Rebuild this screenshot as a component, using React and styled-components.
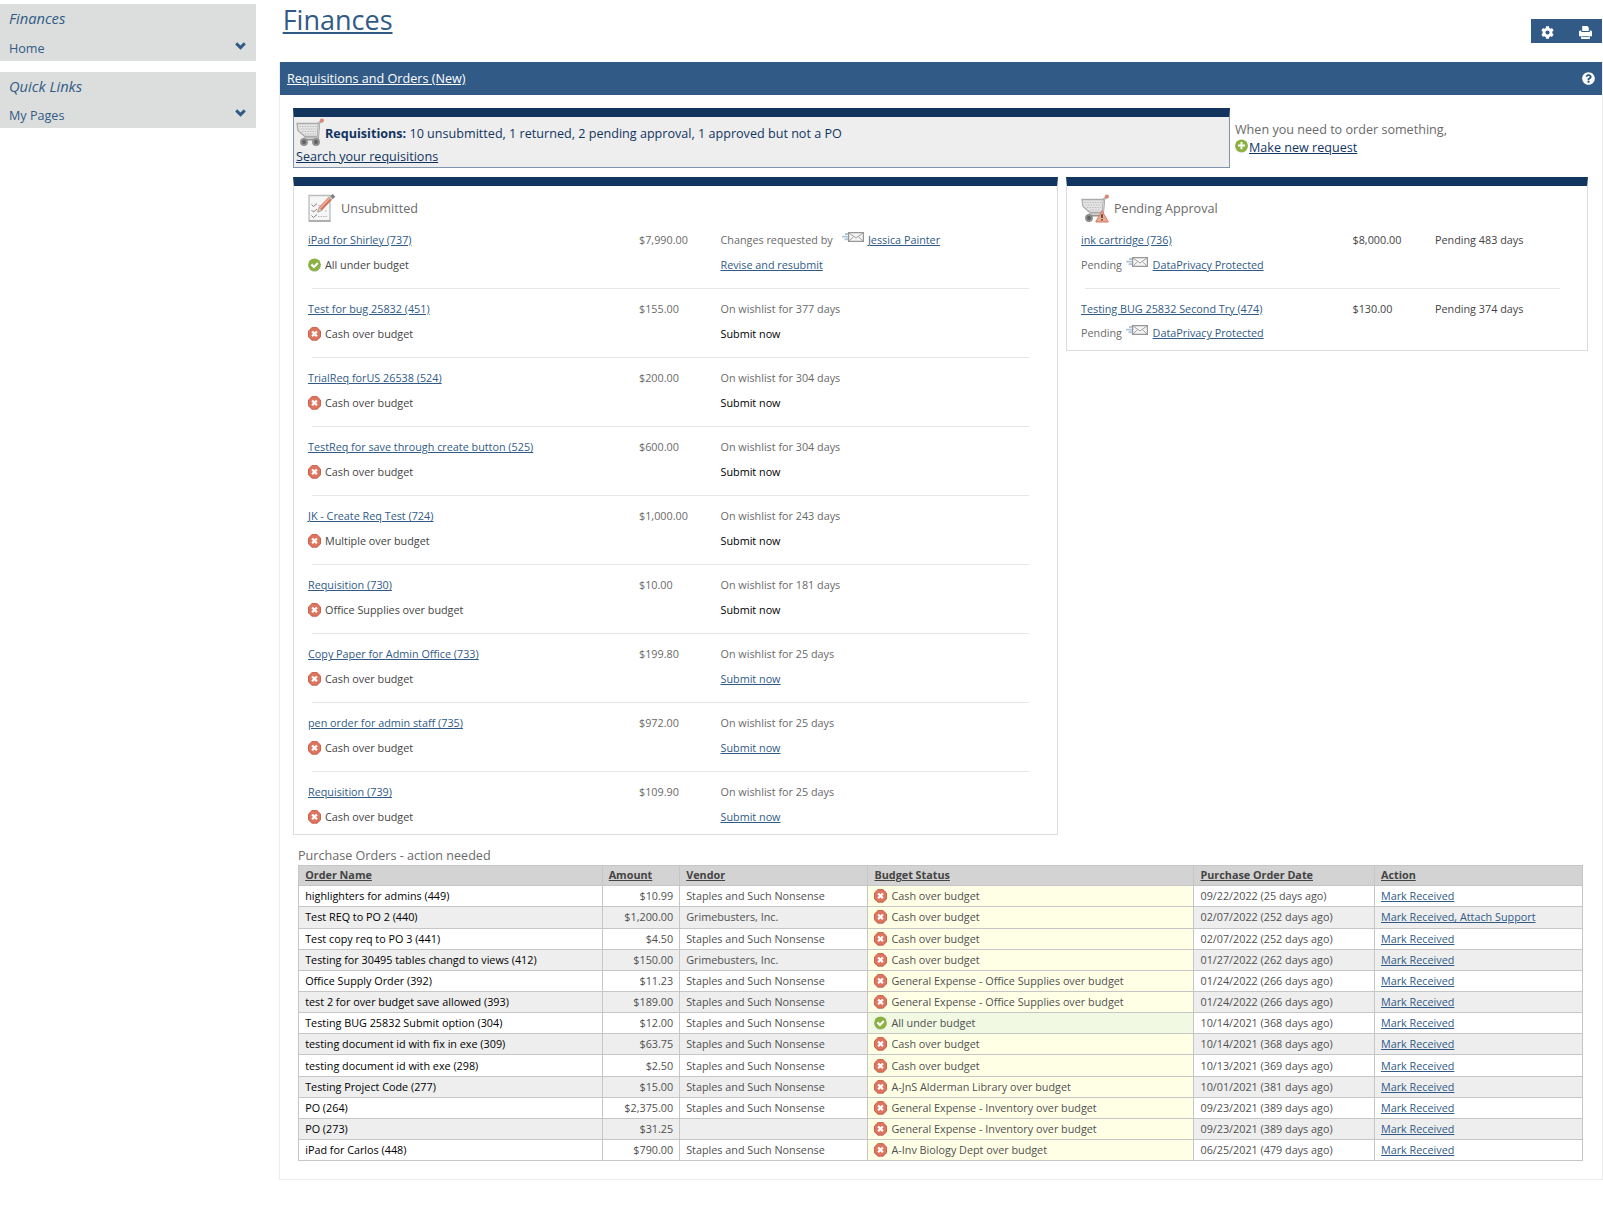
import React from 'react';
import styled, { createGlobalStyle } from 'styled-components';
import { FaCog, FaQuestionCircle } from 'react-icons/fa';

const theme = {
  blue: '#315b86',
  navy: '#11355f',
  text: '#444',
  muted: '#6a6a6a',
  line: '#dcdcdc',
  grid: '#c6c6c6',
};

const GlobalStyle = createGlobalStyle`
  * { box-sizing: border-box; }
  body {
    margin: 0;
    background: #fff;
    color: ${theme.text};
    font-family: 'Open Sans', 'Noto Sans', sans-serif;
    font-size: 10.8px;
    overflow: hidden;
  }
  svg { display: block; flex: none; }
`;

const Page = styled.div`
  display: flex;
  height: 1221px;
`;

const Sidebar = styled.aside`
  width: 256.4px;
  margin-right: 23.1px;
  padding-top: 4.4px;
  flex: none;
`;

const SideBox = styled.nav`
  height: 56.6px;
  margin-bottom: 10.8px;
  padding: 4px 10.5px 0 9px;
  background: #dcdedd;
  color: ${theme.blue};
`;

const SideTitle = styled.div`
  font-size: 14.7px;
  font-style: italic;
  line-height: 21px;
`;

const SideItem = styled.div`
  display: flex;
  align-items: center;
  justify-content: space-between;
  height: 20px;
  margin-top: 9px;
  font-size: 12.6px;

  svg { margin-top: -5px; }
`;

const Main = styled.main`
  flex: 1;
`;

const TopBar = styled.header`
  display: flex;
  justify-content: space-between;
  height: 61.5px;
  padding-left: 3.2px;
`;

const PageTitle = styled.h1`
  margin: 0;
  font-size: 27px;
  font-weight: 400;
  line-height: 39px;
  color: ${theme.blue};
  text-decoration: underline;
`;

const Tools = styled.div`
  display: flex;
  align-items: center;
  justify-content: space-between;
  width: 71.5px;
  height: 24px;
  margin: 19px 1px 0 0;
  padding: 2px 10px 0 10.5px;
  background: ${theme.blue};
  color: #fff;
`;

const Portlet = styled.section`
  height: 1118.5px;
  border: 1px solid #ececec;
  border-top: 0;
`;

const PortletHead = styled.div`
  display: flex;
  align-items: center;
  justify-content: space-between;
  height: 33px;
  padding: 1px 7.5px 0 6.5px;
  background: ${theme.blue};
  color: #fff;
  font-size: 12.6px;
  text-decoration: underline;
`;

const PortletBody = styled.div`
  padding: 13.5px 13px 0 12.5px;
`;

const SummaryRow = styled.div`
  display: flex;
  gap: 5px;
  margin-bottom: 9px;
`;

const Summary = styled.div`
  width: 937px;
  height: 60px;
  border: 1px solid #7f93ad;
  border-top: 9px solid ${theme.navy};
  padding: 1px 2px 0;
  background: #eee;
  color: ${theme.navy};
  font-size: 12.6px;
`;

const SummaryLine = styled.div`
  display: flex;
  align-items: center;
  gap: 1px;
  height: 28px;
  line-height: 28px;
  white-space: pre;

  span { margin-top: 3px; }
`;

const SearchLine = styled.div`
  line-height: 21px;
`;

const OrderHint = styled.div`
  padding-top: 13px;
  color: ${theme.muted};
  font-size: 12.6px;
  line-height: 17.5px;
`;

const HintLink = styled.div`
  display: flex;
  gap: 1px;
`;

const Link = styled.a`
  color: ${props => (props.$dark ? theme.navy : theme.blue)};
  text-decoration: underline;
`;

const Panels = styled.div`
  display: flex;
  align-items: flex-start;
  gap: 8px;
`;

const Panel = styled.section`
  width: ${props => props.$width}px;
  height: ${props => props.$height}px;
  padding: 6px ${props => props.$right}px 0 14px;
  border: 1px solid ${theme.line};
  border-top: 9px solid ${theme.navy};
`;

const PanelTitle = styled.h2`
  display: flex;
  align-items: center;
  gap: ${props => props.$gap}px;
  height: 32px;
  margin: 0;
  color: ${theme.muted};
  font-size: 12.6px;
  font-weight: 400;
`;

const Item = styled.div`
  display: grid;
  grid-template-columns: ${props => props.$columns};
  grid-template-rows: 24.6px 24.6px;
  align-items: center;
  height: ${props => props.$pitch}px;
  padding-top: 3.4px;
`;

const Divider = styled.hr`
  grid-column: 1 / -1;
  width: calc(100% - 4.5px);
  height: 1px;
  margin: 7px 0 0 4.5px;
  border: 0;
  background: #e6e6e6;
`;

const Cell = styled.div`
  display: flex;
  align-items: center;
  color: ${props => (props.$muted ? theme.muted : theme.text)};
  white-space: nowrap;
`;

const Status = styled(Cell)`
  gap: 4px;

  svg { margin-top: 1px; }
`;

const Disabled = styled.span`
  color: #000;
`;

const MailSlot = styled.span`
  padding: 0 4.3px 5px ${props => props.$left}px;
`;

const Caption = styled.div`
  padding: 11px 0 0 5px;
  height: 29.4px;
  color: ${theme.muted};
  font-size: 12.6px;
  line-height: 19px;
`;

const Table = styled.div`
  width: 1285px;
  margin-left: 5.2px;
  border: 1px solid ${theme.grid};
  border-bottom: 0;
`;

const Row = styled.div`
  display: grid;
  grid-template-columns: 303.5px 77.5px 188.3px 326px 180.5px 1fr;
  height: ${props => (props.$head ? 20.5 : 21.17)}px;
  background: ${props => (props.$head ? '#d3d3d3' : props.$odd ? '#eee' : '#fff')};
`;

const Td = styled.div`
  display: flex;
  align-items: center;
  justify-content: ${props => (props.$right ? 'flex-end' : 'flex-start')};
  gap: 4px;
  padding: 0 6px 1px;
  border-right: 1px solid ${theme.grid};
  border-bottom: 1px solid ${theme.grid};
  background: ${props => props.$bg || 'transparent'};
  color: ${props => (props.$strong ? '#000' : '#505050')};
  white-space: nowrap;

  &:last-child { border-right: 0; }

  svg { margin-top: 1px; }
`;

const Th = styled(Td)`
  justify-content: flex-start;
  color: ${theme.text};
  font-weight: 700;
  text-decoration: underline;
`;

const ChevronIcon = () => (
  <svg width="11" height="8" viewBox="0 0 11 8" fill="none">
    <path d="M1.2 1.4L5.5 5.6L9.8 1.4" stroke="currentColor" strokeWidth="2.9" />
  </svg>
);

const PrintIcon = () => (
  <svg width="13" height="13" viewBox="0 0 13 13" fill="currentColor">
    <path d="M3.2 0H8.3L9.8 1.5V5H3.2Z" />
    <path d="M.8 4.6H2.3V6H10.7V4.6H12.2L13 5.6V10.2H0V5.6Z" />
    <path d="M2.6 9.5H10.4L11 13H2Z" />
    <path d="M3.1 10.6H9.9" stroke={theme.blue} strokeWidth=".8" />
  </svg>
);

const CartIcon = ({ warning }) => (
  <svg width="28" height="29" viewBox="0 0 28 29" fill="none">
    <path d="M7 21.2H21.5" stroke="#8f8f8f" strokeWidth="2.6" />
    <path d="M1 5.5H23L21.8 18.5H9L2 12.5Z" fill="#e4e4e4" stroke="#ababab" strokeWidth="1.3" />
    <path d="M3.5 8.5H20.5M4.5 11H20.5M6 13.5H20M9 16H20" stroke="#bababa" strokeWidth="1.2" strokeDasharray="1.4 1.2" />
    <path d="M25.5 3.2L23 5.2L21.8 20.5H8" stroke="#999" strokeWidth="2.2" />
    <path d="M25 3.6L22.9 5.4L21.7 20.4H8" stroke="#d5d5d5" strokeWidth="1" />
    <circle cx="25.9" cy="2.6" r="2.1" fill="#dd8673" />
    <circle cx="8" cy="24" r="3.9" fill="#8d8d8d" />
    <circle cx="8" cy="24" r="1.9" fill="#606060" />
    {!warning && (
      <>
        <circle cx="20" cy="24" r="3.9" fill="#8d8d8d" />
        <circle cx="20" cy="24" r="1.9" fill="#606060" />
      </>
    )}
    {warning && (
      <>
        <path d="M21 16.8L27.3 28H14.7Z" fill="#e9aa92" stroke="#d87961" />
        <path d="M21 20.2V24M21 25.2V26.6" stroke="#4f2a22" strokeWidth="1.5" />
      </>
    )}
  </svg>
);

const ChecklistIcon = () => (
  <svg width="28" height="28" viewBox="0 0 28 28" fill="none">
    <path d="M1 1.5H22V27H1Z" fill="#f6f6f6" stroke="#bcbcbc" strokeWidth="1.3" />
    <path d="M1 27H22.5" stroke="#a8a8a8" strokeWidth="1.6" />
    <path d="M3.5 10.5l2 2 3.5-3M3.5 16l2 2 3.5-3M3.5 21.5l2 2 3.5-3" stroke="#808080" />
    <path d="M10 11.5h4M10 17h2M10 22.5h9M17 17h2" stroke="#b6b6b6" strokeDasharray="1.5 1" />
    <path d="M9.5 18.2L11.2 13.3L14 16.3Z" fill="#edd3b5" stroke="#777" strokeWidth=".6" />
    <path d="M12.4 14.8L22.5 4.2" stroke="#cf745d" strokeWidth="4.4" />
    <path d="M12 14.1L22 3.6" stroke="#efab98" strokeWidth="1.7" />
    <path d="M22.2 4.6L24 3" stroke="#c4c4c4" strokeWidth="4.2" />
    <path d="M23.6 3.4L26 1.3" stroke="#858585" strokeWidth="4" />
  </svg>
);

const StatusIcon = ({ ok }) => (
  <svg width="13" height="14" viewBox="0 0 13 14" fill="none">
    {ok ? (
      <>
        <circle cx="6.5" cy="7.6" r="6.3" fill="#cfd3c6" />
        <circle cx="6.5" cy="6.8" r="6.3" fill="#8bb143" />
        <path d="M3.4 6.4L6 9L9.8 5.1" stroke="#fff" strokeWidth="2.2" />
      </>
    ) : (
      <>
        <path d="M4 1H9L13 4.7V10.2L9 14H4L0 10.2V4.7Z" fill="#d6cbc8" />
        <path d="M4 .6H9L12.5 4V9.7L9 13.1H4L.5 9.7V4Z" fill="#dd7560" stroke="#d0604b" />
        <path d="M4.1 4.5L8.9 9.3M8.9 4.5L4.1 9.3" stroke="#fff" strokeWidth="2.3" />
      </>
    )}
  </svg>
);

const PlusIcon = () => (
  <svg width="13" height="14" viewBox="0 0 13 14" fill="none">
    <circle cx="6.5" cy="7.3" r="6.4" fill="#c5cbb8" />
    <circle cx="6.5" cy="6.7" r="6.3" fill="#8bb23f" />
    <path d="M6.5 3V10.2M3 6.6H10" stroke="#fff" strokeWidth="2" />
  </svg>
);

const MailIcon = () => (
  <svg width="22" height="10" viewBox="0 0 22 10" fill="none">
    <path d="M3 2H7M0 4.6H7M2.5 7.2H7" stroke="#b3c5d8" strokeWidth="1.9" />
    <path d="M6.6 .6H21.4V9.4H6.6Z" fill="#f4f4f4" stroke="#969696" strokeWidth="1.2" />
    <path d="M6.8 .8L14 6L21.2 .8M6.8 9.2L11.7 4.5M21.2 9.2L16.3 4.5" stroke="#a2a2a2" />
  </svg>
);

const unsubmitted = [
  { name: 'iPad for Shirley (737)', amount: '$7,990.00', ok: true, budget: 'All under budget', by: 'Jessica Painter', action: 'Revise and resubmit', active: true },
  { name: 'Test for bug 25832 (451)', amount: '$155.00', budget: 'Cash over budget', days: 377 },
  { name: 'TrialReq forUS 26538 (524)', amount: '$200.00', budget: 'Cash over budget', days: 304 },
  { name: 'TestReq for save through create button (525)', amount: '$600.00', budget: 'Cash over budget', days: 304 },
  { name: 'JK - Create Req Test (724)', amount: '$1,000.00', budget: 'Multiple over budget', days: 243 },
  { name: 'Requisition (730)', amount: '$10.00', budget: 'Office Supplies over budget', days: 181 },
  { name: 'Copy Paper for Admin Office (733)', amount: '$199.80', budget: 'Cash over budget', days: 25, active: true },
  { name: 'pen order for admin staff (735)', amount: '$972.00', budget: 'Cash over budget', days: 25, active: true },
  { name: 'Requisition (739)', amount: '$109.90', budget: 'Cash over budget', days: 25, active: true },
];

const pending = [
  { name: 'ink cartridge (736)', amount: '$8,000.00', days: 483 },
  { name: 'Testing BUG 25832 Second Try (474)', amount: '$130.00', days: 374 },
];

const headings = ['Order Name', 'Amount', 'Vendor', 'Budget Status', 'Purchase Order Date', 'Action'];

const staples = 'Staples and Such Nonsense';

const orders = [
  ['highlighters for admins (449)', '$10.99', staples, 'Cash over budget', '09/22/2022 (25 days ago)'],
  ['Test REQ to PO 2 (440)', '$1,200.00', 'Grimebusters, Inc.', 'Cash over budget', '02/07/2022 (252 days ago)', 'Mark Received, Attach Support'],
  ['Test copy req to PO 3 (441)', '$4.50', staples, 'Cash over budget', '02/07/2022 (252 days ago)'],
  ['Testing for 30495 tables changd to views (412)', '$150.00', 'Grimebusters, Inc.', 'Cash over budget', '01/27/2022 (262 days ago)'],
  ['Office Supply Order (392)', '$11.23', staples, 'General Expense - Office Supplies over budget', '01/24/2022 (266 days ago)'],
  ['test 2 for over budget save allowed (393)', '$189.00', staples, 'General Expense - Office Supplies over budget', '01/24/2022 (266 days ago)'],
  ['Testing BUG 25832 Submit option (304)', '$12.00', staples, 'All under budget', '10/14/2021 (368 days ago)'],
  ['testing document id with fix in exe (309)', '$63.75', staples, 'Cash over budget', '10/14/2021 (368 days ago)'],
  ['testing document id with exe (298)', '$2.50', staples, 'Cash over budget', '10/13/2021 (369 days ago)'],
  ['Testing Project Code (277)', '$15.00', staples, 'A-JnS Alderman Library over budget', '10/01/2021 (381 days ago)'],
  ['PO (264)', '$2,375.00', staples, 'General Expense - Inventory over budget', '09/23/2021 (389 days ago)'],
  ['PO (273)', '$31.25', '', 'General Expense - Inventory over budget', '09/23/2021 (389 days ago)'],
  ['iPad for Carlos (448)', '$790.00', staples, 'A-Inv Biology Dept over budget', '06/25/2021 (479 days ago)'],
];

const SideMenu = ({ title, item }) => (
  <SideBox>
    <SideTitle>{title}</SideTitle>
    <SideItem>
      {item}
      <ChevronIcon />
    </SideItem>
  </SideBox>
);

const UnsubmittedItem = ({ item, last }) => (
  <Item $columns="331px 81.5px 1fr" $pitch={69.02}>
    <Cell><Link>{item.name}</Link></Cell>
    <Cell $muted>{item.amount}</Cell>
    <Cell $muted>
      {item.by ? (
        <>
          Changes requested by
          <MailSlot $left={9}><MailIcon /></MailSlot>
          <Link>{item.by}</Link>
        </>
      ) : `On wishlist for ${item.days} days`}
    </Cell>
    <Status><StatusIcon ok={item.ok} />{item.budget}</Status>
    <Cell />
    <Cell>
      {item.active ? <Link>{item.action || 'Submit now'}</Link> : <Disabled>Submit now</Disabled>}
    </Cell>
    {!last && <Divider />}
  </Item>
);

const PendingItem = ({ item, last }) => (
  <Item $columns="271.5px 82.5px 1fr" $pitch={68.7}>
    <Cell><Link>{item.name}</Link></Cell>
    <Cell>{item.amount}</Cell>
    <Cell>Pending {item.days} days</Cell>
    <Cell $muted>
      Pending
      <MailSlot $left={4.3}><MailIcon /></MailSlot>
      <Link>DataPrivacy Protected</Link>
    </Cell>
    <Cell />
    <Cell />
    {!last && <Divider />}
  </Item>
);

const OrderRow = ({ order, odd }) => {
  const [name, amount, vendor, budget, date, action = 'Mark Received'] = order;
  const ok = budget === 'All under budget';

  return (
    <Row $odd={odd}>
      <Td $strong>{name}</Td>
      <Td $right>{amount}</Td>
      <Td>{vendor}</Td>
      <Td $bg={ok ? '#f1f9e3' : '#ffffe6'}><StatusIcon ok={ok} />{budget}</Td>
      <Td>{date}</Td>
      <Td><Link>{action}</Link></Td>
    </Row>
  );
};

const App = () => (
  <>
    <GlobalStyle />
    <Page>
      <Sidebar>
        <SideMenu title="Finances" item="Home" />
        <SideMenu title="Quick Links" item="My Pages" />
      </Sidebar>
      <Main>
        <TopBar>
          <PageTitle>Finances</PageTitle>
          <Tools>
            <FaCog size={13} />
            <PrintIcon />
          </Tools>
        </TopBar>
        <Portlet>
          <PortletHead>
            Requisitions and Orders (New)
            <FaQuestionCircle size={13} />
          </PortletHead>
          <PortletBody>
            <SummaryRow>
              <Summary>
                <SummaryLine>
                  <CartIcon />
                  <span><b>Requisitions:</b> 10 unsubmitted, 1 returned, 2 pending approval, 1 approved but not a PO</span>
                </SummaryLine>
                <SearchLine><Link $dark>Search your requisitions</Link></SearchLine>
              </Summary>
              <OrderHint>
                When you need to order something,
                <HintLink><PlusIcon /><Link $dark>Make new request</Link></HintLink>
              </OrderHint>
            </SummaryRow>
            <Panels>
              <Panel $width={765} $height={658.3} $right={27.5}>
                <PanelTitle $gap={5}><ChecklistIcon />Unsubmitted</PanelTitle>
                {unsubmitted.map((item, index) => (
                  <UnsubmittedItem key={item.name} item={item} last={index === unsubmitted.length - 1} />
                ))}
              </Panel>
              <Panel $width={522} $height={174.3} $right={27}>
                <PanelTitle $gap={5}><CartIcon warning />Pending Approval</PanelTitle>
                {pending.map((item, index) => (
                  <PendingItem key={item.name} item={item} last={index === pending.length - 1} />
                ))}
              </Panel>
            </Panels>
            <Caption>Purchase Orders - action needed</Caption>
            <Table>
              <Row $head>
                {headings.map(heading => <Th key={heading}>{heading}</Th>)}
              </Row>
              {orders.map((order, index) => (
                <OrderRow key={order[0]} order={order} odd={index % 2 === 1} />
              ))}
            </Table>
          </PortletBody>
        </Portlet>
      </Main>
    </Page>
  </>
);

export default App;
